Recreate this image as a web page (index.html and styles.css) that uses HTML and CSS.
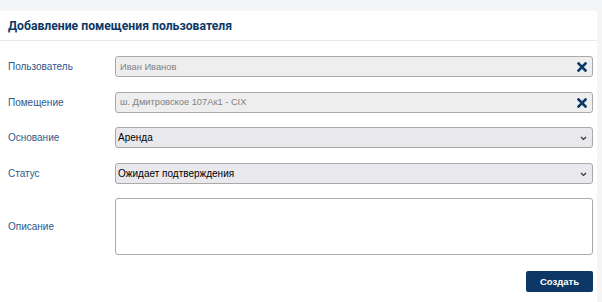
FILE: index.html
```html
<!DOCTYPE html>
<html lang="ru">
<head>
  <meta charset="UTF-8">
  <title>Добавление помещения пользователя</title>
  <link rel="stylesheet" href="styles.css">
</head>
<body>
  <div class="panel">
    <div class="panel-header">
      <h1>Добавление помещения пользователя</h1>
    </div>

    <form class="panel-body">
      <!-- User -->
      <div class="form-row">
        <label>Пользователь</label>
        <div class="field">
          <input type="text" class="control" value="Иван Иванов" disabled>
          <span class="clear">
            <svg width="10" height="10" viewBox="0 0 10 10"><path d="M1.5 1.5 L8.5 8.5 M8.5 1.5 L1.5 8.5" stroke="#0d3a6a" stroke-width="2.6" stroke-linecap="square"/></svg>
          </span>
        </div>
      </div>

      <!-- Room -->
      <div class="form-row">
        <label>Помещение</label>
        <div class="field">
          <input type="text" class="control" value="ш. Дмитровское 107Ак1 - CIX" disabled>
          <span class="clear">
            <svg width="10" height="10" viewBox="0 0 10 10"><path d="M1.5 1.5 L8.5 8.5 M8.5 1.5 L1.5 8.5" stroke="#0d3a6a" stroke-width="2.6" stroke-linecap="square"/></svg>
          </span>
        </div>
      </div>

      <!-- Reason -->
      <div class="form-row">
        <label>Основание</label>
        <div class="field">
          <select class="control select">
            <option>Аренда</option>
          </select>
          <span class="chevron">
            <svg width="7" height="5" viewBox="0 0 7 5"><path d="M1 1 L3.5 3.5 L6 1" fill="none" stroke="#333" stroke-width="1.2"/></svg>
          </span>
        </div>
      </div>

      <!-- Status -->
      <div class="form-row">
        <label>Статус</label>
        <div class="field">
          <select class="control select">
            <option>Ожидает подтверждения</option>
          </select>
          <span class="chevron">
            <svg width="7" height="5" viewBox="0 0 7 5"><path d="M1 1 L3.5 3.5 L6 1" fill="none" stroke="#333" stroke-width="1.2"/></svg>
          </span>
        </div>
      </div>

      <!-- Description -->
      <div class="form-row">
        <label>Описание</label>
        <div class="field">
          <textarea class="control textarea"></textarea>
        </div>
      </div>

      <div class="actions">
        <button type="button">Создать</button>
      </div>
    </form>
  </div>
</body>
</html>
```

FILE: styles.css
```css
body {
  font-family: "Liberation Sans", Arial, sans-serif;
  background-color: #f4f5f7;
  margin: 0;
  padding: 0;
}

.panel {
  margin-top: 11px;
  width: 597px;
  height: 291px;
  background: #fff;
}

.panel-header {
  height: 29px;
  display: flex;
  align-items: center;
  padding: 0 8px;
  border-bottom: 1px solid #e8e9ec;
}

.panel-header h1 {
  margin: 0;
  font-family: Roboto, "Liberation Sans", sans-serif;
  font-size: 12.2px;
  font-weight: bold;
  color: #0d3866;
}

.panel-body {
  padding: 15px 4px 0 8px;
  display: flex;
  flex-direction: column;
  gap: 14.5px;
}

.form-row {
  display: grid;
  grid-template-columns: 107px 1fr;
  align-items: center;
}

.form-row label {
  font-size: 10px;
  color: #2c5a8c;
}

.field {
  position: relative;
}

.control {
  display: block;
  width: 100%;
  box-sizing: border-box;
  height: 21px;
  margin: 0;
  padding: 0 4px;
  border: 1px solid #a9a9a9;
  border-radius: 3px;
  background: #eeeeee;
  font-family: "Liberation Sans", Arial, sans-serif;
  font-size: 10px;
  color: #000;
}

.control:disabled {
  color: #808080;
  font-size: 9.3px;
}

.select {
  appearance: none;
  -webkit-appearance: none;
  background: #e9e8ed;
  padding-left: 2px;
}

.textarea {
  height: 57px;
  background: #fff;
  resize: none;
}

.clear {
  position: absolute;
  right: 6px;
  top: 6px;
  line-height: 0;
}

.chevron {
  position: absolute;
  right: 6px;
  top: 9px;
  line-height: 0;
}

.actions {
  display: flex;
  justify-content: flex-end;
  margin-top: 1.5px;
}

.actions button {
  width: 67px;
  height: 21px;
  background-color: #0d3866;
  color: white;
  border: none;
  border-radius: 2px;
  font-family: "Liberation Sans", Arial, sans-serif;
  font-size: 9.5px;
  font-weight: bold;
  cursor: pointer;
}
```
